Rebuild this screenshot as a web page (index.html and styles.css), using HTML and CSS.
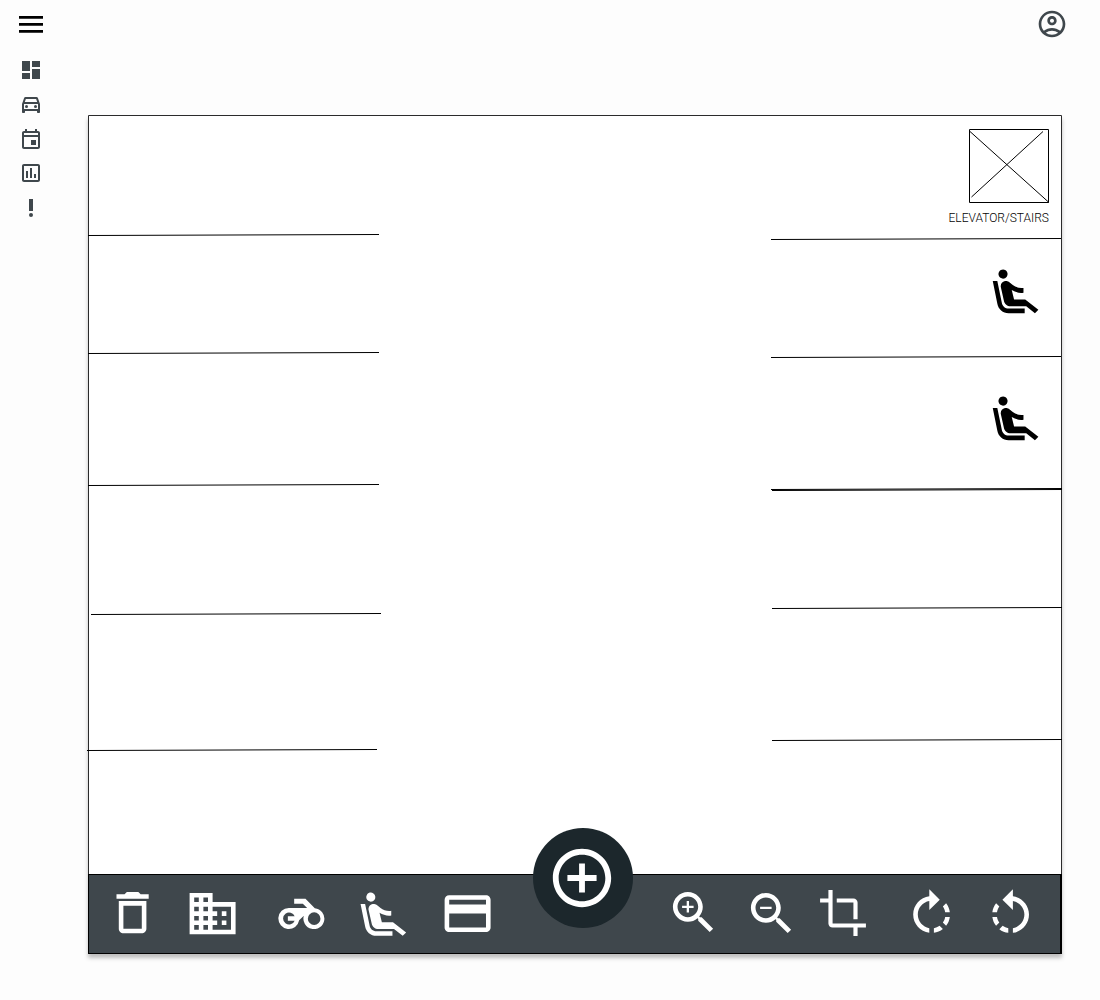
FILE: index.html
```html
<!DOCTYPE html>
<html lang="en">
<head>
<meta charset="utf-8">
<title>Floor layout editor</title>
<link rel="stylesheet" href="styles.css">
</head>
<body>
<div class="app">
  <aside class="sidebar">
    <svg class="menu" viewBox="0 0 24 17"><path d="M0 .1h24v2.7H0zM0 7.1h24v2.7H0zM0 14.1h24v2.7H0z"/></svg>
    <nav class="nav">
      <svg viewBox="0 0 24 24"><path d="M3 13h8V3H3v10zm0 8h8v-6H3v6zm10 0h8V11h-8v10zm0-18v6h8V3h-8z"/></svg>
      <svg viewBox="0 0 24 24"><path d="M18.92 5.01C18.72 4.42 18.16 4 17.5 4h-11c-.66 0-1.21.42-1.42 1.01L3 11v8c0 .55.45 1 1 1h1c.55 0 1-.45 1-1v-1h12v1c0 .55.45 1 1 1h1c.55 0 1-.45 1-1v-8l-2.08-5.99zM6.85 6h10.29l1.04 3H5.81l1.04-3zM19 16H5v-5h14v5z"/><circle cx="7.5" cy="13.5" r="1.5"/><circle cx="16.5" cy="13.5" r="1.5"/></svg>
      <svg viewBox="0 0 24 24"><path d="M19 4h-1V2h-2v2H8V2H6v2H5c-1.11 0-1.99.9-1.99 2L3 20c0 1.1.89 2 2 2h14c1.1 0 2-.9 2-2V6c0-1.1-.9-2-2-2zm0 16H5V10h14v10zm0-12H5V6h14v2zM12 13h5v5h-5z"/></svg>
      <svg viewBox="0 0 24 24"><path d="M7 10h2v7H7zM11 7h2v10h-2zM15 13h2v4h-2zM19 3H5c-1.1 0-2 .9-2 2v14c0 1.1.9 2 2 2h14c1.1 0 2-.9 2-2V5c0-1.1-.9-2-2-2zm0 16H5V5h14v14z" fill-rule="evenodd"/></svg>
      <svg viewBox="0 0 24 24"><circle cx="12" cy="19" r="2"/><path d="M10 3h4v12h-4z"/></svg>
    </nav>
  </aside>
  <main class="main">
    <header class="header">
      <svg class="account" viewBox="0 0 24 24"><path d="M12 2C6.48 2 2 6.48 2 12s4.48 10 10 10 10-4.48 10-10S17.52 2 12 2zM7.35 18.5C8.66 17.56 10.26 17 12 17s3.34.56 4.65 1.5c-1.31.94-2.91 1.5-4.65 1.5s-3.34-.56-4.65-1.5zm10.79-1.38C16.45 15.8 14.32 15 12 15s-4.45.8-6.14 2.12C4.7 15.73 4 13.95 4 12c0-4.42 3.58-8 8-8s8 3.58 8 8c0 1.95-.7 3.73-1.86 5.12z"/><path d="M12 6c-1.93 0-3.5 1.57-3.5 3.5S10.07 13 12 13s3.5-1.57 3.5-3.5S13.93 6 12 6zm0 5c-.83 0-1.5-.67-1.5-1.5S11.17 8 12 8s1.5.67 1.5 1.5S12.83 11 12 11z"/></svg>
    </header>
    <section class="editor">
      <svg class="plan" viewBox="88 115 974 759">
        <defs>
          <path id="seat" d="M5.35 5.64c-.9-.64-1.12-1.88-.49-2.79.63-.9 1.88-1.12 2.79-.49.9.64 1.12 1.88.49 2.79-.64.9-1.88 1.12-2.79.49zM16 19H8.93c-1.48 0-2.74-1.08-2.96-2.54L4 7H2l1.99 9.76C4.37 19.2 6.47 21 8.94 21H16v-2zm.23-4h-4.88l-1.03-4.1c1.58.89 3.28 1.54 5.15 1.22V9.99c-1.63.31-3.44-.27-4.69-1.25L9.14 7.47c-.23-.18-.49-.3-.76-.38-.32-.09-.66-.12-.99-.06h-.02c-1.23.22-2.05 1.39-1.84 2.61l1.35 5.92C7.16 16.98 8.39 18 9.83 18h6.85l3.82 3 1.5-1.5-5.77-4.5z"/>
        </defs>
        <path class="frame" d="M88.5 874V115.5h973V874"/>
        <g class="walls">
          <path d="M88 235.5l291-1M88 353.5l291-1M88 485.5l291-1M91 614.5l290-1M87 750.5l290-1"/>
          <path d="M771 239.5l290-1M771 357.5l290-1M772 608.5l290-1M772 740.5l290-1"/>
          <path d="M771 489.5l291-1M772 490.5l290-1"/>
          <path d="M969.5 129.5h79v73h-79zM970 131.5l79 71M971.5 197l71.5-65.5"/>
        </g>
        <text class="label" x="948.5" y="222">ELEVATOR/STAIRS</text>
        <use href="#seat" transform="translate(988.2 264.9) scale(2.28 2.3)"/>
        <use href="#seat" transform="translate(988.2 391.9) scale(2.28 2.3)"/>
      </svg>
      <div class="toolbar">
        <svg class="tool trash" viewBox="0 0 24 24"><path d="M6 19c0 1.1.9 2 2 2h8c1.1 0 2-.9 2-2V7H6v12zM8 9h8v10H8V9zm7.5-5l-1-1h-5l-1 1H5v2h14V4z"/></svg>
        <svg class="tool building" viewBox="0 0 24 24"><path d="M12 7V3H2v18h20V7H12zM6 19H4v-2h2v2zm0-4H4v-2h2v2zm0-4H4V9h2v2zm0-4H4V5h2v2zm4 12H8v-2h2v2zm0-4H8v-2h2v2zm0-4H8V9h2v2zm0-4H8V5h2v2zm10 12h-8v-2h2v-2h-2v-2h2v-2h-2V9h8v10zm-2-8h-2v2h2v-2zm0 4h-2v2h2v-2z"/></svg>
        <svg class="tool motorcycle" viewBox="595 113 140 94"><path fill-rule="evenodd" d="M627 143H682L669 130H643V115H677L705 143.5A31.5 31.5 0 1 1 672 166L658 180A31.5 31.5 0 1 1 627 143ZM644.5 181H624V168H644.5A18 18 0 1 0 644.5 181ZM684 175a19 19 0 1 0 38 0a19 19 0 1 0-38 0Z"/></svg>
        <svg class="tool seat" viewBox="0 0 24 24"><use href="#seat"/></svg>
        <svg class="tool card" viewBox="0 0 24 24"><path d="M20 4H4c-1.11 0-1.99.89-1.99 2L2 18c0 1.11.89 2 2 2h16c1.11 0 2-.89 2-2V6c0-1.11-.89-2-2-2zm0 14H4v-6h16v6zm0-10H4V6h16v2z"/></svg>
        <svg class="tool zoom-in" viewBox="0 0 24 24"><path d="M15.5 14h-.79l-.28-.27C15.41 12.59 16 11.11 16 9.5 16 5.91 13.09 3 9.5 3S3 5.91 3 9.5 5.91 16 9.5 16c1.61 0 3.09-.59 4.23-1.57l.27.28v.79l5 4.99L20.49 19l-4.99-5zm-6 0C7.01 14 5 11.99 5 9.5S7.01 5 9.5 5 14 7.01 14 9.5 11.99 14 9.5 14zM12 10h-2v2H9v-2H7V9h2V7h1v2h2v1z"/></svg>
        <svg class="tool zoom-out" viewBox="0 0 24 24"><path d="M15.5 14h-.79l-.28-.27C15.41 12.59 16 11.11 16 9.5 16 5.91 13.09 3 9.5 3S3 5.91 3 9.5 5.91 16 9.5 16c1.61 0 3.09-.59 4.23-1.57l.27.28v.79l5 4.99L20.49 19l-4.99-5zm-6 0C7.01 14 5 11.99 5 9.5S7.01 5 9.5 5 14 7.01 14 9.5 11.99 14 9.5 14zM7 9h5v1H7z"/></svg>
        <svg class="tool crop" viewBox="0 0 24 24"><path d="M17 15h2V7c0-1.1-.9-2-2-2H9v2h8v8zM7 17V1H5v4H1v2h4v10c0 1.1.9 2 2 2h10v4h2v-4h4v-2H7z"/></svg>
        <svg class="tool rotate-right" viewBox="0 0 24 24"><path d="M15.55 5.55L11 1v3.07C7.06 4.56 4 7.92 4 12s3.05 7.44 7 7.93v-2.02c-2.84-.48-5-2.94-5-5.91s2.16-5.43 5-5.91V10l4.55-4.45zM19.93 11c-.17-1.39-.72-2.73-1.62-3.89l-1.42 1.42c.54.75.88 1.6 1.02 2.47h2.02zM13 17.9v2.02c1.39-.17 2.74-.71 3.9-1.61l-1.44-1.44c-.75.54-1.59.89-2.46 1.03zm3.89-2.42l1.42 1.41c.9-1.16 1.45-2.5 1.62-3.89h-2.02c-.14.87-.48 1.72-1.02 2.48z"/></svg>
        <svg class="tool rotate-left" viewBox="0 0 24 24"><path d="M7.11 8.53L5.7 7.11C4.8 8.27 4.24 9.61 4.07 11h2.02c.14-.87.49-1.72 1.02-2.47zM6.09 13H4.07c.17 1.39.72 2.73 1.62 3.89l1.41-1.42c-.52-.75-.87-1.59-1.01-2.47zm1.01 5.32c1.16.9 2.51 1.44 3.9 1.61V17.9c-.87-.15-1.71-.49-2.46-1.03L7.1 18.32zM13 4.07V1L8.45 5.55 13 10V6.09c2.84.48 5 2.94 5 5.91s-2.16 5.43-5 5.91v2.02c3.95-.49 7-3.85 7-7.93s-3.05-7.44-7-7.93z"/></svg>
        <div class="add"><svg viewBox="0 0 24 24"><path d="M13 7h-2v4H7v2h4v4h2v-4h4v-2h-4V7zm-1-5C6.48 2 2 6.48 2 12s4.48 10 10 10 10-4.48 10-10S17.52 2 12 2zm0 18c-4.41 0-8-3.59-8-8s3.59-8 8-8 8 3.59 8 8-3.59 8-8 8z"/></svg></div>
      </div>
    </section>
  </main>
</div>
</body>
</html>
```
FILE: styles.css
```css
* {
  box-sizing: border-box;
}

body {
  margin: 0;
  background: #fdfdfd;
  font-family: Roboto, "Liberation Sans", sans-serif;
}

svg {
  display: block;
  flex: none;
}

.app {
  display: flex;
  width: 1100px;
  height: 1000px;
  overflow: hidden;
}

.sidebar {
  width: 88px;
  flex: none;
  padding: 16px 0 0 19px;
}

.menu {
  width: 24px;
  height: 17px;
}

.nav {
  display: flex;
  flex-direction: column;
  gap: 10px;
  margin-top: 25px;
}

.nav svg {
  width: 24px;
  height: 24px;
  fill: #3f474c;
}

.nav svg:nth-child(2),
.nav svg:nth-child(5) {
  margin-top: 1px;
}

.main {
  flex: 1;
}

.header {
  display: flex;
  justify-content: flex-end;
  height: 115px;
  padding: 8.3px 31.7px 0 0;
}

.account {
  width: 32px;
  height: 32px;
  fill: #3f474c;
}

.editor {
  width: 974px;
  background: #fff;
  box-shadow: 0 4px 4px rgba(0, 0, 0, .25);
}

.plan {
  width: 974px;
  height: 759px;
  overflow: visible;
}

.frame {
  fill: none;
  stroke: #2b2b2c;
}

.walls {
  fill: none;
  stroke: #000;
  stroke-width: 1;
}

.label {
  font-size: 12px;
  font-weight: 300;
  fill: #000;
  opacity: .99;
}

.toolbar {
  position: relative;
  display: flex;
  align-items: flex-start;
  height: 80px;
  border: 1px solid #000;
  border-right-width: 2px;
  background: #3f474c;
}

.tool {
  width: 55.2px;
  height: 55.2px;
  fill: #fff;
}

.trash {
  margin: 10px 0 0 15.9px;
}

.building {
  margin: 10.7px 0 0 24.8px;
}

.motorcycle {
  width: 47px;
  height: 31.3px;
  margin: 22.6px 0 0 38.2px;
}

.seat {
  width: 54.7px;
  height: 54.7px;
  margin: 12.9px 0 0 30.9px;
}

.card {
  margin: 10.9px 0 0 29px;
}

.zoom-in {
  width: 55.2px;
  height: 55.2px;
  margin: 10px 0 0 170.8px;
}

.zoom-out {
  width: 55.2px;
  height: 55.2px;
  margin: 11px 0 0 22.8px;
}

.crop {
  width: 50px;
  height: 50px;
  margin: 13px 0 0 18.9px;
}

.rotate-right {
  margin: 12.2px 0 0 35.8px;
}

.rotate-left {
  margin: 12.2px 0 0 23.8px;
}

.add {
  position: absolute;
  left: 444px;
  top: -47px;
  display: flex;
  align-items: center;
  justify-content: center;
  width: 100px;
  height: 100px;
  border-radius: 50%;
  background: #1c272c;
}

.add svg {
  width: 70px;
  height: 70px;
  margin-right: 2px;
  fill: #fff;
}
```
